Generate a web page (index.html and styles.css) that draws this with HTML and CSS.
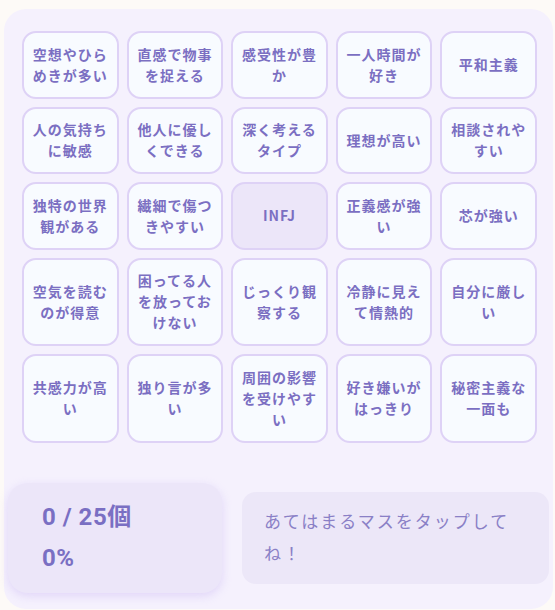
FILE: index.html
```html
<!DOCTYPE html>
<html lang="ja">
<head>
<meta charset="utf-8">
<title>INFJ ビンゴ</title>
<link rel="stylesheet" href="styles.css">
</head>
<body>
<main class="board">
  <div class="grid">
    <div class="cell">空想やひらめきが多い</div>
    <div class="cell">直感で物事を捉える</div>
    <div class="cell">感受性が豊か</div>
    <div class="cell">一人時間が好き</div>
    <div class="cell">平和主義</div>
    <div class="cell">人の気持ちに敏感</div>
    <div class="cell">他人に優しくできる</div>
    <div class="cell">深く考えるタイプ</div>
    <div class="cell">理想が高い</div>
    <div class="cell">相談されやすい</div>
    <div class="cell">独特の世界観がある</div>
    <div class="cell">繊細で傷つきやすい</div>
    <div class="cell cell-free">INFJ</div>
    <div class="cell">正義感が強い</div>
    <div class="cell">芯が強い</div>
    <div class="cell">空気を読むのが得意</div>
    <div class="cell">困ってる人を放っておけない</div>
    <div class="cell">じっくり観察する</div>
    <div class="cell">冷静に見えて情熱的</div>
    <div class="cell">自分に厳しい</div>
    <div class="cell">共感力が高い</div>
    <div class="cell">独り言が多い</div>
    <div class="cell">周囲の影響を受けやすい</div>
    <div class="cell">好き嫌いがはっきり</div>
    <div class="cell">秘密主義な一面も</div>
  </div>
  <div class="footer">
    <div class="stats">
      <div class="stats-line">0 / 25個</div>
      <div class="stats-line">0%</div>
    </div>
    <div class="hint">あてはまるマスをタップしてね！</div>
  </div>
</main>
</body>
</html>
```

FILE: styles.css
```css
html, body {
  margin: 0;
  padding: 0;
}
body {
  background: #fdfaf7;
  font-family: "Noto Sans CJK JP", "Noto Sans", sans-serif;
  color: #7b6fc2;
  padding: 9px 2px 2px 4px;
  width: 549px;
}
.board {
  background: #f5f1fd;
  border-radius: 22px;
  padding: 22px 16px 16px 18px;
}
.grid {
  display: grid;
  grid-template-columns: repeat(5, 1fr);
  gap: 8px;
}
.cell {
  display: flex;
  align-items: center;
  justify-content: center;
  text-align: center;
  background: #f8fbff;
  border: 2px solid #ded2f6;
  border-radius: 14px;
  padding: 10.75px 8px;
  font-size: 14px;
  line-height: 21px;
  font-weight: 700;
  letter-spacing: 1px;
  color: #7b6fc2;
}
.cell-free {
  background: #ece6f9;
}
.footer {
  display: flex;
  align-items: center;
  gap: 20px;
  margin-top: 40px;
  margin-left: -14px;
  margin-right: -12px;
}
.stats {
  width: 180px;
  flex: none;
  background: #ece6f9;
  border-radius: 20px;
  padding: 14px 0 14px 34px;
  box-shadow: 0 3px 10px rgba(200, 180, 245, 0.45);
}
.stats-line {
  font-family: "Roboto", "Noto Sans CJK JP", sans-serif;
  font-size: 24px;
  line-height: 41px;
  font-weight: 700;
  letter-spacing: 0.5px;
  color: #7a6fc3;
}
.hint {
  flex: 1;
  background: #ece7f8;
  border-radius: 14px;
  padding: 13px 22px 15px;
  font-size: 17px;
  line-height: 32px;
  letter-spacing: 2px;
  color: #8a80c6;
}
```
